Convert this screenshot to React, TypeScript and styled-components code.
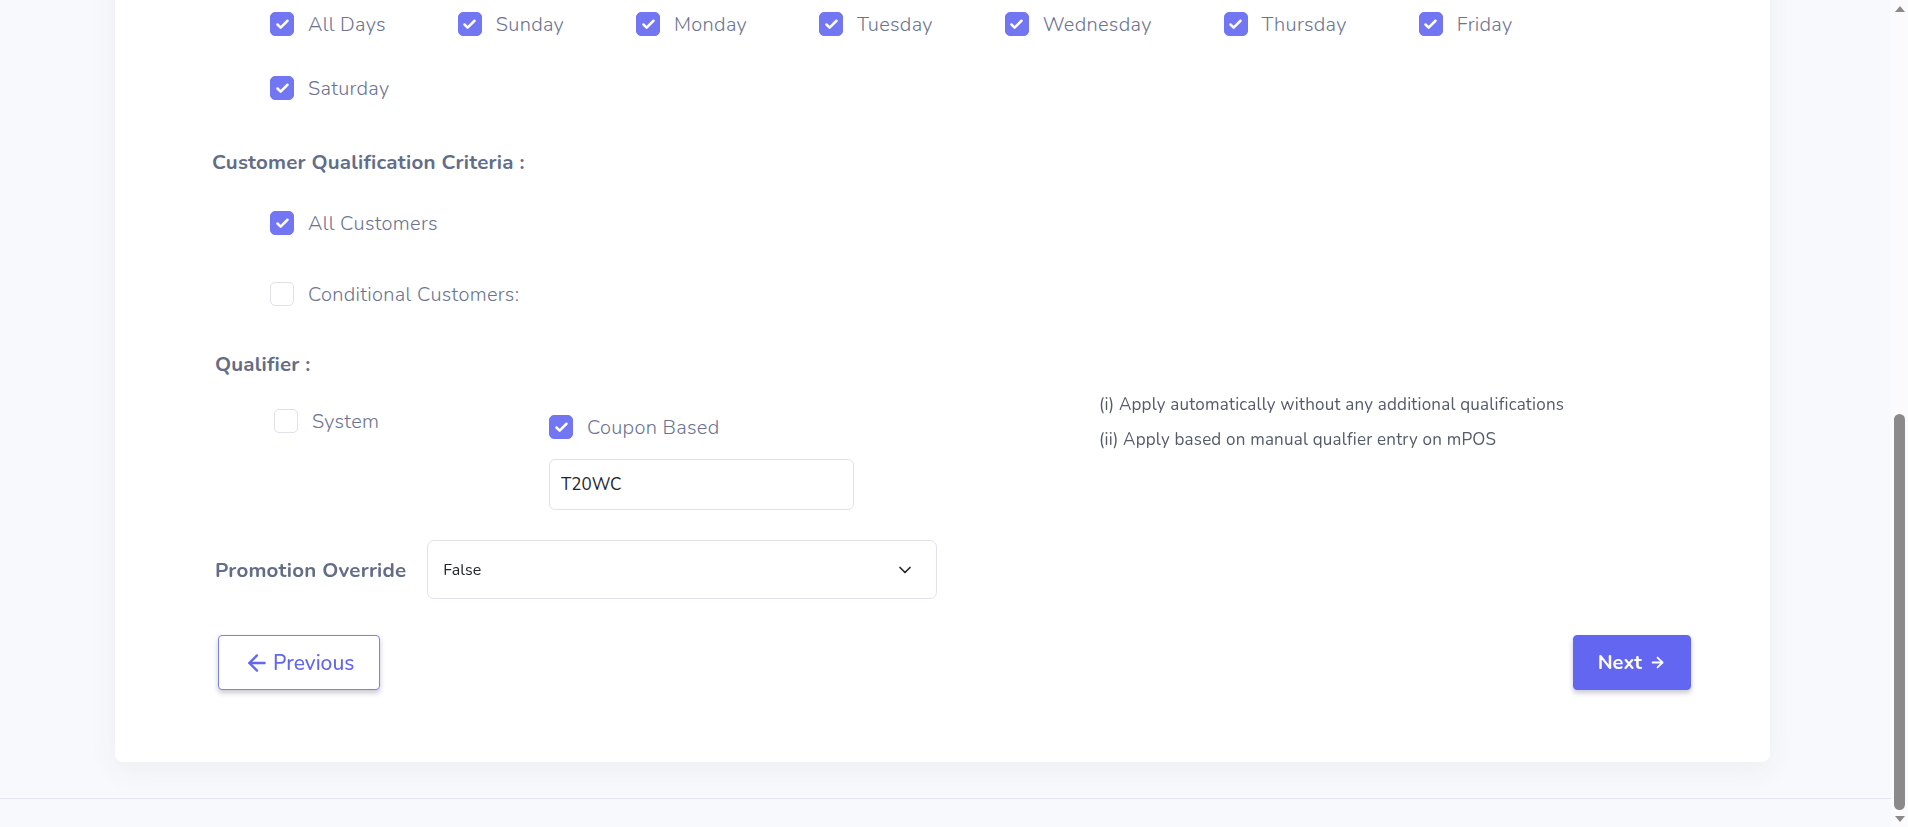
import { useLayoutEffect, useRef, useState } from "react";
import styled, { createGlobalStyle } from "styled-components";
import { ArrowLeft, ArrowRight, Check, ChevronDown } from "lucide-react";

const GlobalStyle = createGlobalStyle`
  html, body {
    margin: 0;
    padding: 0;
    height: 100%;
    overflow: hidden;
  }
  body {
    font-family: "Nunito", Lato, "Noto Sans", sans-serif;
  }
  * { box-sizing: border-box; }
`;

const Frame = styled.div`
  display: flex;
  height: 100vh;
  background: #f8f9fc;
`;

// the page is scrolled down to the end of the form
const Shell = styled.div`
  flex: 1;
  min-width: 0;
  overflow-y: scroll;
  scrollbar-width: none;
  &::-webkit-scrollbar {
    display: none;
  }
`;

const ScrollTrack = styled.div`
  width: 17px;
  flex-shrink: 0;
  display: flex;
  flex-direction: column;
  align-items: center;
  background: #fbfbfd;
`;

const ArrowCell = styled.div`
  height: 17px;
  width: 17px;
  display: flex;
  align-items: center;
  justify-content: center;
`;

const Triangle = styled.span<{ $down?: boolean }>`
  width: 0;
  height: 0;
  border-left: 5px solid transparent;
  border-right: 5px solid transparent;
  ${(p) => (p.$down ? "border-top: 6px solid #8a8a8a;" : "border-bottom: 6px solid #8a8a8a;")}
`;

const ThumbArea = styled.div`
  flex: 1;
  width: 100%;
  display: flex;
  flex-direction: column;
  align-items: center;
`;

const Thumb = styled.div`
  width: 11px;
  border-radius: 6px;
  background: #8a8a8a;
`;

const Main = styled.main`
  padding: 30px 121px 36px 115px;
`;

const Card = styled.div`
  background: #fff;
  border-radius: 8px;
  box-shadow: 0 8px 30px rgba(60, 70, 110, 0.06);
  padding: 40px 79px 72px 97px;
`;

const Footer = styled.footer`
  height: 29px;
  border-top: 1px solid #e3e6ee;
`;

const FormTitle = styled.h2`
  margin: 0 0 36px;
  font-size: 26px;
  font-weight: 700;
  color: #4a5270;
`;

const FieldGrid = styled.div`
  display: grid;
  grid-template-columns: 1fr 1fr;
  column-gap: 40px;
  row-gap: 30px;
  margin-bottom: 44px;
`;

const Field = styled.div<{ $wide?: boolean }>`
  display: flex;
  flex-direction: column;
  gap: 10px;
  grid-column: ${(p) => (p.$wide ? "1 / -1" : "auto")};
`;

const FieldLabel = styled.label`
  font-size: 18px;
  font-weight: 700;
  color: #5f6883;
`;

const TextBox = styled.input<{ $width?: number }>`
  height: 51px;
  width: ${(p) => (p.$width ? `${p.$width}px` : "100%")};
  border: 1px solid #dfe2e8;
  border-radius: 6px;
  padding: 0 11px;
  font-family: "Nunito", Lato, sans-serif;
  font-size: 17px;
  color: #212529;
  caret-color: #000;
  background: #fff;
  outline: none;
`;

const TextArea = styled.textarea`
  height: 120px;
  border: 1px solid #dfe2e8;
  border-radius: 6px;
  padding: 12px;
  font-family: "Nunito", Lato, sans-serif;
  font-size: 17px;
  color: #212529;
  resize: none;
  outline: none;
`;

const SectionTitle = styled.h3<{ $indent?: number }>`
  margin: 0;
  padding-left: ${(p) => p.$indent ?? 0}px;
  font-size: 20.5px;
  letter-spacing: 0.2px;
  line-height: 24px;
  font-weight: 700;
  color: #646d87;
  white-space: nowrap;
`;

const DaysGroup = styled.div`
  display: flex;
  flex-wrap: wrap;
  column-gap: 72px;
  row-gap: 40px;
  max-width: 1380px;
  margin: 20px 0 50px 58px;
`;

const CheckList = styled.div`
  display: flex;
  flex-direction: column;
  gap: 47px;
  margin: 37px 0 46px 58px;
`;

const CheckRow = styled.label<{ $top?: number }>`
  display: flex;
  align-items: center;
  gap: 14px;
  height: 24px;
  margin-top: ${(p) => p.$top ?? 0}px;
  cursor: pointer;
`;

const Box = styled.span<{ $checked: boolean }>`
  width: 24px;
  height: 24px;
  flex-shrink: 0;
  border-radius: 5px;
  display: inline-flex;
  align-items: center;
  justify-content: center;
  background: ${(p) => (p.$checked ? "#7276f3" : "#fff")};
  border: 1px solid ${(p) => (p.$checked ? "#7276f3" : "#dfe2ea")};
`;

const CheckText = styled.span`
  font-size: 20px;
  letter-spacing: 0.3px;
  font-weight: 300;
  color: #6b7391;
  white-space: nowrap;
`;

const QualifierGrid = styled.div`
  display: grid;
  grid-template-columns: 275px 550px 1fr;
  margin: 9px 0 30px 62px;
`;

const Column = styled.div`
  display: flex;
  flex-direction: column;
  gap: 20px;
`;

const Notes = styled.div`
  display: flex;
  flex-direction: column;
  padding-top: 2px;
`;

const Note = styled.p`
  margin: 0;
  font-size: 17px;
  letter-spacing: 0.2px;
  line-height: 35px;
  color: #555b6b;
  white-space: nowrap;
`;

const OverrideRow = styled.div`
  display: flex;
  align-items: center;
  gap: 21px;
  padding-left: 3px;
`;

const SelectWrap = styled.div`
  position: relative;
  width: 510px;
  height: 59px;
`;

const Select = styled.select`
  appearance: none;
  width: 100%;
  height: 100%;
  border: 1px solid #dfe2e8;
  border-radius: 7px;
  padding: 0 15px;
  background: #fff;
  font-family: "Nunito", Lato, sans-serif;
  font-size: 16px;
  color: #212529;
  outline: none;
`;

const Chevron = styled(ChevronDown)`
  position: absolute;
  right: 22px;
  top: 50%;
  transform: translateY(-50%);
  pointer-events: none;
  color: #212529;
`;

const ButtonRow = styled.div`
  display: flex;
  justify-content: space-between;
  align-items: center;
  margin-top: 36px;
  padding-left: 6px;
`;

const NavButton = styled.button<{ $primary?: boolean }>`
  display: inline-flex;
  align-items: center;
  justify-content: center;
  gap: ${(p) => (p.$primary ? "7px" : "3px")};
  height: 55px;
  padding: 0 ${(p) => (p.$primary ? "24px" : "25px")};
  border-radius: 4px;
  border: 1px solid ${(p) => (p.$primary ? "#6366f1" : "#7b7ff4")};
  background: ${(p) => (p.$primary ? "#6366f1" : "#fff")};
  color: ${(p) => (p.$primary ? "#fff" : "#6366f1")};
  font-family: "Nunito", Lato, sans-serif;
  font-size: ${(p) => (p.$primary ? "20px" : "21px")};
  font-weight: ${(p) => (p.$primary ? 700 : 500)};
  box-shadow: 0 3px 5px rgba(40, 40, 80, 0.25);
  cursor: pointer;
`;

const days = ["All Days", "Sunday", "Monday", "Tuesday", "Wednesday", "Thursday", "Friday", "Saturday"];

function CheckItem({ label, checked, top }: { label: string; checked: boolean; top?: number }) {
  return (
    <CheckRow $top={top}>
      <Box $checked={checked}>{checked && <Check size={15} strokeWidth={4} color="#fff" />}</Box>
      <CheckText>{label}</CheckText>
    </CheckRow>
  );
}

export default function App() {
  const shellRef = useRef<HTMLDivElement>(null);
  const [thumb, setThumb] = useState({ top: 0, size: 100 });

  useLayoutEffect(() => {
    const el = shellRef.current;
    if (!el) return;
    el.scrollTop = el.scrollHeight;
    const track = el.clientHeight - 34;
    setThumb({
      top: (track * el.scrollTop) / el.scrollHeight,
      size: (track * el.clientHeight) / el.scrollHeight,
    });
  }, []);

  return (
    <>
      <GlobalStyle />
      <Frame>
        <Shell ref={shellRef}>
          <Main>
            <Card>
              <FormTitle>Promotion Details</FormTitle>
              <FieldGrid>
                <Field>
                  <FieldLabel>Promotion Name</FieldLabel>
                  <TextBox defaultValue="T20 World Cup Offer" />
                </Field>
                <Field>
                  <FieldLabel>Promotion Code</FieldLabel>
                  <TextBox defaultValue="PROMO-T20WC" />
                </Field>
                <Field $wide>
                  <FieldLabel>Description</FieldLabel>
                  <TextArea defaultValue="Special discount during the T20 World Cup." />
                </Field>
                <Field>
                  <FieldLabel>Start Date</FieldLabel>
                  <TextBox defaultValue="01/06/2024" />
                </Field>
                <Field>
                  <FieldLabel>End Date</FieldLabel>
                  <TextBox defaultValue="30/06/2024" />
                </Field>
                <Field>
                  <FieldLabel>Start Time</FieldLabel>
                  <TextBox defaultValue="00:00" />
                </Field>
                <Field>
                  <FieldLabel>End Time</FieldLabel>
                  <TextBox defaultValue="23:59" />
                </Field>
                <Field>
                  <FieldLabel>Priority</FieldLabel>
                  <TextBox defaultValue="1" />
                </Field>
                <Field>
                  <FieldLabel>Store Group</FieldLabel>
                  <TextBox defaultValue="All Stores" />
                </Field>
              </FieldGrid>
              <SectionTitle>Applicable Days :</SectionTitle>

              <DaysGroup>
                {days.map((d) => (
                  <CheckItem key={d} label={d} checked />
                ))}
              </DaysGroup>

              <SectionTitle>Customer Qualification Criteria :</SectionTitle>
              <CheckList>
                <CheckItem label="All Customers" checked />
                <CheckItem label="Conditional Customers:" checked={false} />
              </CheckList>

              <SectionTitle $indent={3}>Qualifier :</SectionTitle>
              <QualifierGrid>
                <Column>
                  <CheckItem label="System" checked={false} top={24} />
                </Column>
                <Column>
                  <CheckItem label="Coupon Based" checked top={30} />
                  <TextBox $width={305} defaultValue="T20WC" autoFocus />
                </Column>
                <Notes>
                  <Note>(i) Apply automatically without any additional qualifications</Note>
                  <Note>(ii) Apply based on manual qualfier entry on mPOS</Note>
                </Notes>
              </QualifierGrid>

              <OverrideRow>
                <SectionTitle>Promotion Override</SectionTitle>
                <SelectWrap>
                  <Select defaultValue="false">
                    <option value="false">False</option>
                    <option value="true">True</option>
                  </Select>
                  <Chevron size={20} strokeWidth={2} />
                </SelectWrap>
              </OverrideRow>

              <ButtonRow>
                <NavButton>
                  <ArrowLeft size={26} strokeWidth={2.2} />
                  Previous
                </NavButton>
                <NavButton $primary>
                  Next
                  <ArrowRight size={17} strokeWidth={2.5} />
                </NavButton>
              </ButtonRow>
            </Card>
          </Main>
          <Footer />
        </Shell>
        <ScrollTrack>
          <ArrowCell>
            <Triangle />
          </ArrowCell>
          <ThumbArea>
            <Thumb style={{ marginTop: `${thumb.top}px`, height: `${thumb.size}px` }} />
          </ThumbArea>
          <ArrowCell>
            <Triangle $down />
          </ArrowCell>
        </ScrollTrack>
      </Frame>
    </>
  );
}
